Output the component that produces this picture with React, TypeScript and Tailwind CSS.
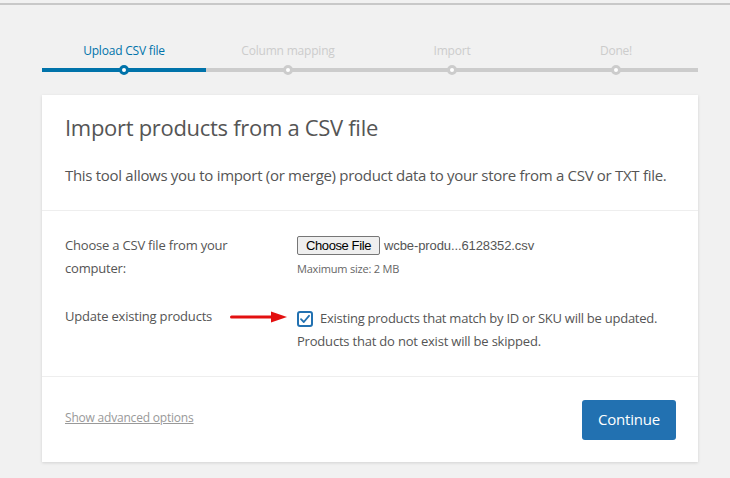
import React from "react";

const steps = ["Upload CSV file", "Column mapping", "Import", "Done!"];

export default function App() {
  return (
    <div
      className="w-[730px] h-[478px] bg-[#f1f1f1] overflow-hidden relative"
      style={{ fontFamily: '"Open Sans", "Noto Sans", sans-serif' }}
    >
      <div className="h-[3px] bg-[#f1f1f1]" />
      <div className="h-[2px] bg-[#c8c8c8]" />
      <div className="pl-[42px] pr-[32px] pt-[38px]">
        {/* Steps */}
        <div className="grid grid-cols-4">
          {steps.map((s, i) => (
            <div key={s} className="flex flex-col items-center">
              <div
                className={`text-[12px] leading-[16px] tracking-[-0.2px] ${
                  i === 0 ? "text-[#0073aa]" : "text-[#cccccc]"
                }`}
              >
                {s}
              </div>
              <div className="relative w-full h-[10px] mt-[6px] flex items-center justify-center">
                <div
                  className={`absolute left-0 right-0 top-[3px] h-[4px] ${
                    i === 0 ? "bg-[#0073aa]" : "bg-[#cccccc]"
                  }`}
                />
                <div
                  className={`relative w-[10px] h-[10px] rounded-full bg-white border-[3px] ${
                    i === 0 ? "border-[#0073aa]" : "border-[#cccccc]"
                  }`}
                />
              </div>
            </div>
          ))}
        </div>

        {/* Card */}
        <div className="mt-[20px] bg-white shadow-[0_1px_3px_rgba(0,0,0,0.13)]">
          <div className="px-[23px] pt-[17px] pb-[25px] border-b border-[#eeeeee]">
            <h1 className="text-[22px] leading-[30px] text-[#555555] tracking-[-0.3px]">
              Import products from a CSV file
            </h1>
            <p className="mt-[23px] text-[15px] leading-[20px] text-[#555555] tracking-[-0.3px]">
              This tool allows you to import (or merge) product data to your store from a CSV or TXT file.
            </p>
          </div>

          <div className="px-[23px] pt-[23px] pb-[23px] border-b border-[#eeeeee] text-[13px] leading-[23px] text-[#555555] tracking-[-0.2px]">
            <div className="flex">
              <div className="w-[232px] pr-[20px]">Choose a CSV file from your computer:</div>
              <div className="flex-1">
                <div className="flex items-center h-[23px]">
                  <span
                    className="inline-flex items-center h-[19px] px-[8px] border border-[#767676] rounded-[2px] bg-[#efefef] text-[13px] text-black tracking-[-0.4px]"
                    style={{ fontFamily: '"Liberation Sans", Arial, sans-serif' }}
                  >
                    Choose File
                  </span>
                  <span
                    className="ml-[4px] text-[13px] text-[#555555] tracking-[-0.1px]"
                    style={{ fontFamily: '"Liberation Sans", Arial, sans-serif' }}
                  >
                    wcbe-produ...6128352.csv
                  </span>
                </div>
                <div className="text-[11px] leading-[23px] text-[#666666]">Maximum size: 2 MB</div>
              </div>
            </div>

            <div className="flex mt-[25px]">
              <div className="w-[232px] pr-[20px] relative">
                Update existing products
              </div>
              <div className="flex-1 relative">
                <svg
                  className="absolute left-[-68px] top-[5px]"
                  width="60"
                  height="14"
                  viewBox="0 0 60 14"
                >
                  <rect x="1" y="5.5" width="44" height="3" rx="1.5" fill="#e31010" />
                  <polygon points="42,1.5 58,7 42,12.5" fill="#e31010" />
                </svg>
                <div className="flex items-center h-[23px] mt-[2px]">
                  <span className="w-[16px] h-[16px] rounded-[3px] border-2 border-[#2271b1] flex items-center justify-center mr-[7px]">
                    <svg width="12" height="12" viewBox="0 0 12 12">
                      <path d="M2 6.2 L4.8 9 L10 2.8" fill="none" stroke="#2271b1" strokeWidth="1.8" strokeLinecap="round" strokeLinejoin="round" />
                    </svg>
                  </span>
                  <span className="tracking-[-0.25px]">Existing products that match by ID or SKU will be updated.</span>
                </div>
                <div>Products that do not exist will be skipped.</div>
              </div>
            </div>
          </div>

          <div className="px-[22px] h-[85px] flex items-center justify-between">
            <a className="text-[12px] text-[#999999] underline tracking-[-0.2px] mb-[4px] ml-[1px]">Show advanced options</a>
            <button className="w-[94px] h-[40px] rounded-[3px] bg-[#2271b1] text-white text-[15px] tracking-[-0.2px]">
              Continue
            </button>
          </div>
        </div>
      </div>
    </div>
  );
}
